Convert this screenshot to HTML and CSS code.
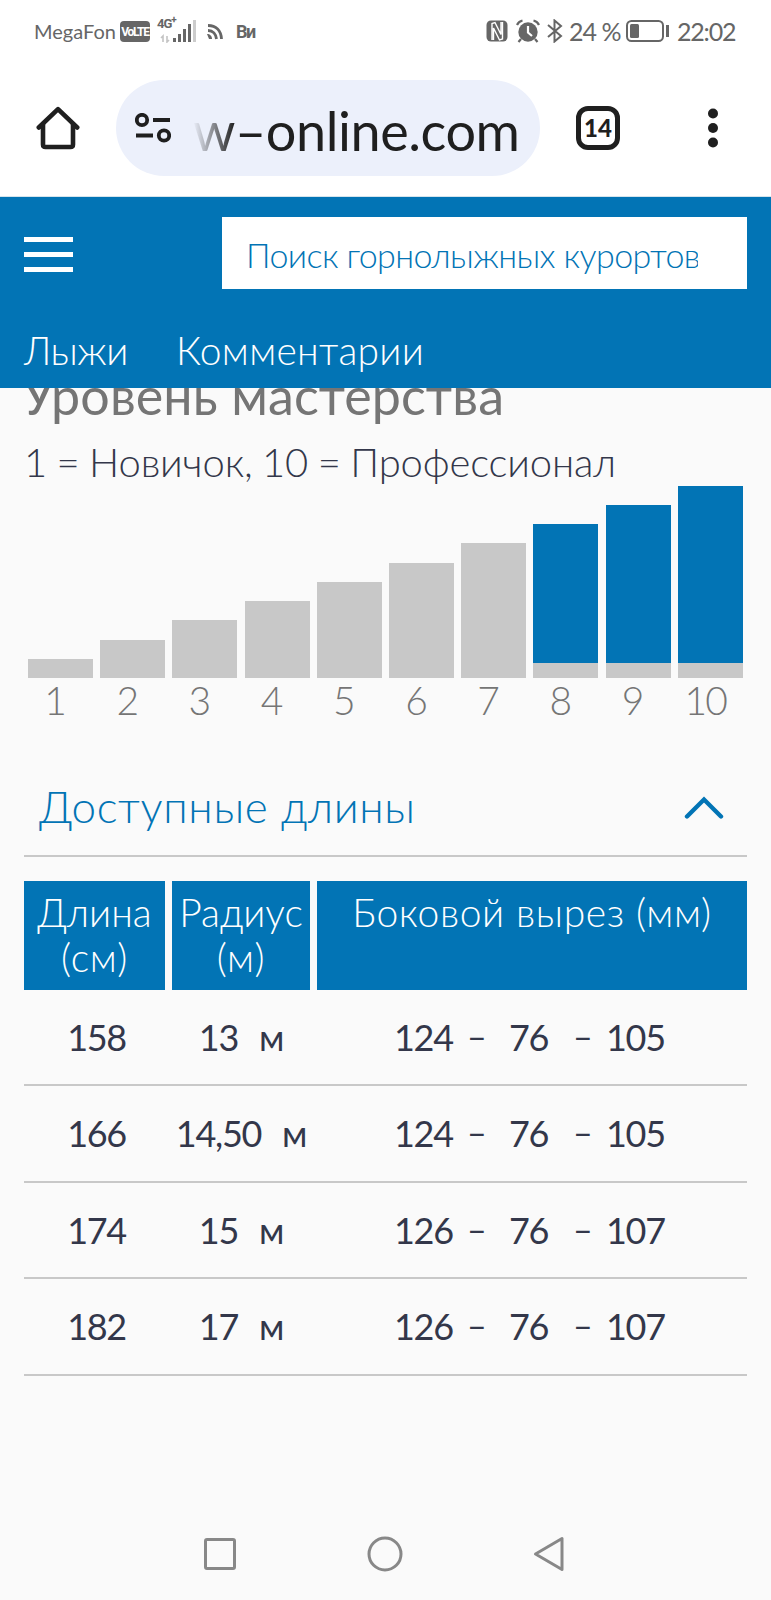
FILE: index.html
```html
<!DOCTYPE html>
<html lang="ru">
<head>
    <meta charset="UTF-8">
    <title>Лыжи</title>
    <link rel="stylesheet" href="styles.css">
</head>
<body>
    <div class="status-bar">
        <div class="status-left">
            <span class="carrier">MegaFon</span>
            <span class="volte">VoLTE</span>
            <div class="network">
                <span class="network-type">4G<sup>+</sup></span>
                <svg width="40" height="24" viewBox="0 0 40 24">
                    <path d="M6 23v-6l-2 2M10 17v6l2-2" fill="none" stroke="#c4c4c4" stroke-width="1.6"/>
                    <path d="M16 19h3v4h-3zM21 15h3v8h-3zM26 10h3v13h-3zM31 5h3v18h-3z" fill="#666"/>
                    <path d="M36 1h3v22h-3z" fill="#ccc"/>
                </svg>
            </div>
            <svg class="cast-icon" width="16" height="16" viewBox="0 0 16 16" fill="none" stroke="#666" stroke-width="2.8">
                <path d="M1 1.500c8 0 13 5 13.500 13.500M1 6.500c5 0 8 3.500 8.500 8.500"/>
                <path d="M0 10c3 0 5 2 5 5H2z" fill="#666" stroke="none"/>
            </svg>
            <span class="app-label">Ви</span>
        </div>
        <div class="status-right">
            <svg class="nfc-icon" width="22" height="22" viewBox="0 0 22 22">
                <rect x="0.500" y="0.500" width="21" height="21" rx="4.500" fill="#666"/>
                <path d="M6 20V3.500l3-1 6 12V2M7.500 20V8l6 12 3-1V2" fill="none" stroke="#fff" stroke-width="1.400"/>
            </svg>
            <svg class="alarm-icon" width="24" height="24" viewBox="0 0 24 24">
                <circle cx="12" cy="13" r="9.700" fill="#666"/>
                <path d="M1 6q1.500-3.500 5.500-4.500M23 6q-1.500-3.500-5.500-4.500M5 20l-2.500 3M19 20l2.500 3" fill="none" stroke="#666" stroke-width="2.200"/>
                <path d="M12 7v6.500l4 3.500" fill="none" stroke="#fff" stroke-width="2.200"/>
            </svg>
            <svg class="bt-icon" width="16" height="24" viewBox="0 0 16 24" fill="none" stroke="#666" stroke-width="2">
                <path d="M1 6l13 11-6.500 5.500V1.500L14 7 1 18"/>
            </svg>
            <span class="battery-level">24 %</span>
            <svg class="battery-icon" width="44" height="24" viewBox="0 0 44 24">
                <rect x="1" y="2" width="36" height="20" rx="4.500" fill="none" stroke="#666" stroke-width="2"/>
                <rect x="4" y="5" width="9" height="14" rx="1.500" fill="#666"/>
                <path d="M40 6h3v12h-3z" fill="#666"/>
            </svg>
            <span class="clock">22:02</span>
        </div>
    </div>

    <div class="browser-bar">
        <svg class="home-icon" width="44" height="44" viewBox="0 0 44 44" fill="none" stroke="#1f1f1f" stroke-width="4.600" stroke-linecap="round" stroke-linejoin="round">
            <path d="M2.800 21.500L22 3.200l19.200 18.300"/>
            <path d="M7 18.500v20q0 2.500 2.500 2.500h25q2.500 0 2.500-2.500v-20"/>
        </svg>
        <div class="address">
            <svg width="36" height="30" viewBox="0 0 36 30" fill="none" stroke="#1f1f1f" stroke-width="3.800">
                <circle cx="7" cy="7" r="5.200"/>
                <path d="M18 7h17M1 22.500h17"/>
                <circle cx="29" cy="22.500" r="5.200"/>
            </svg>
            <span class="url"><span class="url-fade">w</span>–online.com</span>
        </div>
        <div class="tabs">14</div>
        <svg class="more-icon" width="10" height="40" viewBox="0 0 10 40" fill="#1f1f1f">
            <circle cx="5" cy="5.500" r="5"/>
            <circle cx="5" cy="20" r="5"/>
            <circle cx="5" cy="34.500" r="5"/>
        </svg>
    </div>

    <header class="site-header">
        <div class="header-row">
            <div class="menu">
                <span></span>
                <span></span>
                <span></span>
            </div>
            <div class="search"><div class="search-text">Поиск горнолыжных курортов</div></div>
        </div>
        <nav class="site-nav">
            <a class="nav-skis">Лыжи</a>
            <a class="nav-comments">Комментарии</a>
        </nav>
    </header>

    <main class="content">
        <div class="heading-clip"><h2>Уровень мастерства</h2></div>
        <p class="hint">1 = Новичок, 10 = Профессионал</p>

        <div class="chart">
            <div class="level l1"><div class="bar"></div><span>1</span></div>
            <div class="level l2"><div class="bar"></div><span>2</span></div>
            <div class="level l3"><div class="bar"></div><span>3</span></div>
            <div class="level l4"><div class="bar"></div><span>4</span></div>
            <div class="level l5"><div class="bar"></div><span>5</span></div>
            <div class="level l6"><div class="bar"></div><span>6</span></div>
            <div class="level l7"><div class="bar"></div><span>7</span></div>
            <div class="level l8 active"><div class="bar"></div><span>8</span></div>
            <div class="level l9 active"><div class="bar"></div><span>9</span></div>
            <div class="level l10 active"><div class="bar"></div><span>10</span></div>
        </div>

        <div class="accordion">
            <h3>Доступные длины</h3>
            <svg width="40" height="24" viewBox="0 0 40 24" fill="none" stroke="#0274b5" stroke-width="4.400" stroke-linecap="round">
                <path d="M3 20.500L20 3.500l17 17"/>
            </svg>
        </div>

        <div class="sizes-head">
            <div class="th-length">Длина<br><span>(см)</span></div>
            <div class="th-radius">Радиус<br><span>(м)</span></div>
            <div class="th-cut">Боковой вырез (мм)</div>
        </div>
        <div class="sizes-row">
            <div class="length">158</div>
            <div class="radius"><span>13</span><span>м</span></div>
            <div class="cut"><span>124</span><i>–</i><span>76</span><i>–</i><span>105</span></div>
        </div>
        <div class="sizes-row">
            <div class="length">166</div>
            <div class="radius"><span>14,50</span><span>м</span></div>
            <div class="cut"><span>124</span><i>–</i><span>76</span><i>–</i><span>105</span></div>
        </div>
        <div class="sizes-row">
            <div class="length">174</div>
            <div class="radius"><span>15</span><span>м</span></div>
            <div class="cut"><span>126</span><i>–</i><span>76</span><i>–</i><span>107</span></div>
        </div>
        <div class="sizes-row">
            <div class="length">182</div>
            <div class="radius"><span>17</span><span>м</span></div>
            <div class="cut"><span>126</span><i>–</i><span>76</span><i>–</i><span>107</span></div>
        </div>
    </main>

    <div class="system-nav">
        <svg width="32" height="32" viewBox="0 0 32 32" fill="none" stroke="#888" stroke-width="3">
            <rect x="1.500" y="1.500" width="29" height="29" rx="1.500"/>
        </svg>
        <svg width="36" height="36" viewBox="0 0 36 36" fill="none" stroke="#888" stroke-width="3">
            <circle cx="18" cy="18" r="16"/>
        </svg>
        <svg width="32" height="36" viewBox="0 0 32 36" fill="none" stroke="#888" stroke-width="3" stroke-linejoin="round">
            <path d="M29 2.500v31L2.500 18z"/>
        </svg>
    </div>
</body>
</html>
```
FILE: styles.css
```css
* {
    box-sizing: border-box;
}

body {
    margin: 0;
    width: 771px;
    height: 1600px;
    overflow: hidden;
    display: flex;
    flex-direction: column;
    background-color: #fafafa;
    font-family: Lato, "Open Sans", sans-serif;
    font-weight: 300;
    color: #33374a;
    white-space: nowrap;
}

svg {
    display: block;
    flex: none;
}

/* phone status bar */
.status-bar {
    height: 64px;
    padding: 0 35px 0 34px;
    display: flex;
    justify-content: space-between;
    background-color: #fff;
    color: #666;
}

.status-left,
.status-right {
    height: 62px;
    display: flex;
    align-items: center;
}

.carrier {
    width: 86px;
    font-size: 20px;
    font-weight: 400;
    line-height: 20px;
    padding-bottom: 1px;
}

.volte {
    width: 30px;
    height: 21px;
    margin-right: 7px;
    border-radius: 4px;
    background-color: #666;
    color: #fff;
    font-family: Roboto, sans-serif;
    font-size: 12px;
    font-weight: bold;
    line-height: 22px;
    letter-spacing: -1.200px;
    text-align: center;
}

.network {
    position: relative;
    width: 50px;
}

.network-type {
    position: absolute;
    left: 0;
    top: -2px;
    font-family: Roboto, sans-serif;
    font-size: 13px;
    font-weight: bold;
    line-height: 14px;
    letter-spacing: -1px;
}

.network-type sup {
    font-size: 10px;
    line-height: 0;
}

.cast-icon {
    margin-top: 2px;
}

.app-label {
    margin-left: 13px;
    font-family: Roboto, sans-serif;
    font-size: 18px;
    font-weight: bold;
    letter-spacing: -1.500px;
}

.nfc-icon {
    margin-right: 8px;
}

.alarm-icon {
    margin-right: 7px;
}

.bt-icon {
    margin-right: 6px;
}

.battery-level {
    width: 57px;
    font-size: 25px;
    font-weight: 400;
    letter-spacing: -1px;
}

.battery-icon {
    margin-right: 7px;
}

.clock {
    width: 59px;
    font-size: 25px;
    font-weight: 400;
    letter-spacing: -1.200px;
}

/* browser toolbar */
.browser-bar {
    height: 133px;
    padding: 0 53px 5px 36px;
    display: flex;
    align-items: center;
    background-color: #fff;
    border-bottom: 1px solid #d5e4ec;
}

.address {
    flex: none;
    width: 424px;
    height: 96px;
    margin-left: 36px;
    padding-left: 19px;
    border-radius: 48px;
    background-color: #ecf0fb;
    display: flex;
    align-items: center;
}

.url {
    margin-left: 22px;
    padding-top: 6px;
    font-size: 54px;
    font-weight: 400;
    line-height: 60px;
    letter-spacing: -0.450px;
    color: #1f1f1f;
}

.url-fade {
    background: linear-gradient(to right, #ecf0fb, #1f1f1f);
    -webkit-background-clip: text;
    background-clip: text;
    color: transparent;
}

.tabs {
    width: 44px;
    height: 44px;
    margin-left: 36px;
    border: 5px solid #1f1f1f;
    border-radius: 12px;
    color: #1f1f1f;
    font-size: 24px;
    font-weight: 900;
    line-height: 33px;
    text-align: center;
}

.more-icon {
    margin-left: auto;
}

/* site header */
.site-header {
    height: 191px;
    padding: 20px 24px 0;
    background-color: #0274b5;
    color: #fff;
}

.header-row {
    display: flex;
    justify-content: space-between;
}

.menu {
    width: 49px;
    height: 35px;
    margin-top: 20px;
    display: flex;
    flex-direction: column;
    justify-content: space-between;
}

.menu span {
    height: 5px;
    background-color: #fff;
}

.search {
    width: 525px;
    height: 72px;
    padding: 0 49px 0 24px;
    background-color: #fff;
}

.search-text {
    overflow: hidden;
    font-size: 34px;
    line-height: 75px;
    letter-spacing: -0.580px;
    color: #0274b5;
}

.site-nav {
    display: flex;
    margin-top: 37px;
    font-size: 39px;
    line-height: 48px;
}

.nav-skis {
    width: 152px;
    letter-spacing: -0.500px;
}

.nav-comments {
    letter-spacing: 0.300px;
}

/* skill level */
.content {
    padding: 0 24px;
}

.heading-clip {
    height: 46px;
    overflow: hidden;
}

h2 {
    margin: -19px 0 0 -2px;
    font-size: 52px;
    font-weight: 400;
    line-height: 52px;
    letter-spacing: 0.100px;
    color: #757575;
}

.hint {
    margin: 4px 0 0;
    font-size: 40px;
    line-height: 48px;
    letter-spacing: -0.150px;
    word-spacing: -1.200px;
}

.chart {
    height: 240px;
    margin-top: -1px;
    padding-left: 4px;
    display: flex;
    align-items: flex-end;
}

.level {
    flex: none;
    width: 72.200px;
}

.level .bar {
    width: 65px;
    background-color: #c8c8c8;
}

.level span {
    display: block;
    width: 55px;
    height: 47px;
    font-size: 39px;
    line-height: 44px;
    text-align: center;
    color: #757575;
}

.level.active .bar {
    background-color: #0274b5;
    border-bottom: 15px solid #c8c8c8;
}

.l1 .bar { height: 19px; }
.l2 .bar { height: 38px; }
.l3 .bar { height: 58px; }
.l4 .bar { height: 77px; }
.l5 .bar { height: 96px; }
.l6 .bar { height: 115px; }
.l7 .bar { height: 135px; }
.l8 .bar { height: 154px; }
.l9 .bar { height: 173px; }
.l10 .bar { height: 192px; }

.l10 span {
    letter-spacing: -2px;
}

/* available lengths */
.accordion {
    height: 97px;
    margin-top: 35px;
    padding: 0 23px 0 15px;
    display: flex;
    align-items: center;
    justify-content: space-between;
    border-bottom: 2px solid #c8c8c8;
    color: #0274b5;
}

h3 {
    margin: -4px 0 0;
    font-size: 44px;
    font-weight: 300;
    letter-spacing: 0.650px;
}

.sizes-head {
    display: grid;
    grid-template-columns: 141px 138px 430px;
    gap: 7px;
    height: 109px;
    margin-top: 24px;
    text-align: center;
    font-size: 39px;
    line-height: 45px;
    color: #fff;
}

.sizes-head div {
    padding-top: 9px;
    background-color: #0274b5;
}

.sizes-head span {
    letter-spacing: 0.800px;
}

.sizes-head .th-cut {
    letter-spacing: 0.650px;
}

.sizes-row {
    display: grid;
    grid-template-columns: 141px 138px 430px;
    gap: 7px;
    height: 96.400px;
    border-bottom: 2px solid #c8c8c8;
    font-size: 36px;
    font-weight: 400;
    line-height: 95px;
    letter-spacing: -1.300px;
    text-align: center;
}

.length {
    padding-left: 4px;
}

.radius {
    display: flex;
    justify-content: center;
    gap: 21px;
}

.cut {
    display: grid;
    grid-template-columns: 73px 42px 64px 33px 60px;
    padding-left: 77px;
    text-align: left;
}

.cut i {
    font-style: normal;
    font-size: 34px;
    line-height: 92px;
}

/* phone navigation buttons */
.system-nav {
    margin-top: auto;
    height: 92px;
    padding: 0 206px 0 204px;
    display: flex;
    align-items: center;
    justify-content: space-between;
}
```
